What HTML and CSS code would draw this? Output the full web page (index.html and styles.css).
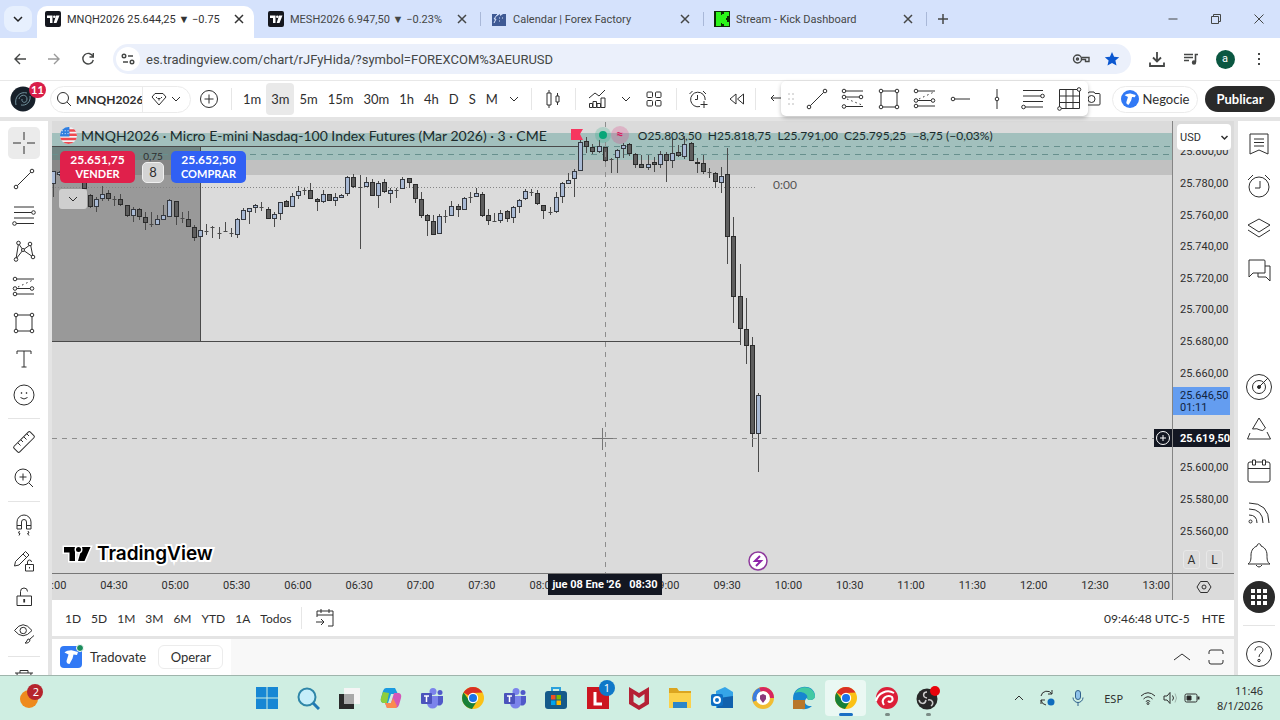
FILE: index.html
```html
<!DOCTYPE html>
<html lang="es">
<head>
  <meta charset="UTF-8">
  <meta name="viewport" content="width=device-width, initial-scale=1.0">
  <title>MNQH2026 25.644,25 ▼ −0.75%</title>
  <link rel="stylesheet" href="styles.css">
</head>
<body>
  <!-- icon set -->
  <svg class="sprite" aria-hidden="true">
    <symbol id="i-chev" viewBox="0 0 12 12"><path d="M2 4l4 4 4-4"/></symbol>
    <symbol id="i-close" viewBox="0 0 16 16"><path d="M4 4l8 8M12 4l-8 8"/></symbol>
    <symbol id="i-tv" viewBox="0 0 16 16"><rect width="16" height="16" rx="2" fill="#15171e" stroke="none"/><path d="M2 4.500h5.500V12H5V7H2zM11 4.500h3.500L11.500 12H8.700z" fill="#fff" stroke="none"/><circle cx="9.300" cy="5.800" r="1.300" fill="#fff" stroke="none"/></symbol>
    <symbol id="i-cross" viewBox="0 0 28 28"><path d="M14 3v8M14 17v8M3 14h8M17 14h8"/></symbol>
    <symbol id="i-line" viewBox="0 0 28 28"><circle cx="6" cy="22" r="1.800"/><circle cx="22" cy="6" r="1.800"/><path d="M7.300 20.700L20.700 7.300"/></symbol>
    <symbol id="i-fib" viewBox="0 0 28 28"><path d="M4 6h20M4 11.500h18M4 17h20M6 22.500h18"/><circle cx="23.500" cy="11.500" r="1.800" fill="#fff"/><circle cx="4.500" cy="22.500" r="1.800" fill="#fff"/></symbol>
    <symbol id="i-fib3" viewBox="0 0 28 28"><path d="M4 5.500h20M4 11h18M4 16.500h20M6 22h18"/><circle cx="23.500" cy="11" r="1.800" fill="#fff"/><circle cx="4.500" cy="22" r="1.800" fill="#fff"/></symbol>
    <symbol id="i-pattern" viewBox="0 0 28 28"><path d="M6 22L8.500 6.500 13 13 20.500 7.500 23 20 13 13z"/><g fill="#fff"><circle cx="6" cy="22.500" r="1.800"/><circle cx="8.500" cy="6" r="1.800"/><circle cx="20" cy="7" r="1.800"/><circle cx="23" cy="20" r="1.800"/><circle cx="13" cy="13" r="1.500"/></g></symbol>
    <symbol id="i-long" viewBox="0 0 28 28"><path d="M6 6h18M6 15.500h17M6 21h18"/><path d="M8 14l15-7" stroke-dasharray="1.500 3"/><g fill="#fff"><circle cx="5" cy="6" r="1.800"/><circle cx="5" cy="15.500" r="1.800"/><circle cx="5" cy="21" r="1.800"/><circle cx="22" cy="15.500" r="1.800"/></g></symbol>
    <symbol id="i-short" viewBox="0 0 28 28"><path d="M6 6h18M6 12h17M6 21.500h18"/><path d="M8 14l15 6" stroke-dasharray="1.500 3"/><g fill="#fff"><circle cx="5" cy="6" r="1.800"/><circle cx="5" cy="12" r="1.800"/><circle cx="5" cy="21.500" r="1.800"/><circle cx="22" cy="12" r="1.800"/></g></symbol>
    <symbol id="i-rect" viewBox="0 0 28 28"><path d="M6 6h16v16H6z"/><g fill="#fff"><circle cx="6" cy="6" r="1.800"/><circle cx="22" cy="6" r="1.800"/><circle cx="6" cy="22" r="1.800"/><circle cx="22" cy="22" r="1.800"/></g></symbol>
    <symbol id="i-text" viewBox="0 0 28 28"><path d="M7 9V6h14v3M14 6v16M11.500 22h5"/></symbol>
    <symbol id="i-smile" viewBox="0 0 28 28"><circle cx="14" cy="14" r="10"/><path d="M10.500 16.500q3.500 3 7 0"/><circle cx="11.500" cy="12" r=".5"/><circle cx="16.500" cy="12" r=".5"/></symbol>
    <symbol id="i-ruler" viewBox="0 0 28 28"><rect x="2.500" y="10" width="23" height="8" rx="1.500" transform="rotate(-45 14 14)"/><path d="M8 15l2.500 2.500M11 12l2 2M14 9l2.500 2.500M17 6l2 2"/></symbol>
    <symbol id="i-zoom" viewBox="0 0 28 28"><circle cx="13" cy="13" r="8"/><path d="M19 19l4 4M13 9.500v7M9.500 13h7"/></symbol>
    <symbol id="i-magnet" viewBox="0 0 28 28"><path d="M7 18v-7a7 7 0 0 1 14 0v7h-4.500v-7a2.500 2.500 0 0 0-5 0v7zM7 14.500h4.500M16.500 14.500H21M9.500 20l-1 2 1.500.5-1 2M18 20l1 2-1.500.5 1.500 2"/></symbol>
    <symbol id="i-penlock" viewBox="0 0 28 28"><path d="M4.500 19l1-4.500L15.500 4.500l3.500 3.500L9 18zM13 7l3.500 3.500M15.500 17.500h8V24h-8zM17.500 17.500V15a2 2 0 0 1 4 0M19.500 20v1.500"/></symbol>
    <symbol id="i-lock" viewBox="0 0 28 28"><path d="M7 13h14.500v9.500H7zM10.500 13V8.500a3.500 3.500 0 0 1 7 0"/><path d="M14.200 16v3.500" stroke-width="1.800"/></symbol>
    <symbol id="i-eye" viewBox="0 0 28 28"><path d="M4.500 11.500Q13 0 22 11.500 13 22 4.500 11.500zM15 24c3 .5 5-1 5-3.500l-2-.5c-1 1-1 3-3 4zM20 20l4-3.500"/><circle cx="13.200" cy="11.500" r="3.200"/></symbol>
    <symbol id="i-trash" viewBox="0 0 28 28"><path d="M5 7h18M10 7V4.500h8V7M7 7l1 16h12l1-16"/></symbol>
    <symbol id="i-vline" viewBox="0 0 28 28"><path d="M14 4v20"/><circle cx="14" cy="14" r="1.800" fill="#fff"/></symbol>
    <symbol id="i-hray" viewBox="0 0 28 28"><path d="M6 14h17"/><circle cx="6" cy="14" r="1.800" fill="#fff"/></symbol>
    <symbol id="i-gridbox" viewBox="0 0 28 28"><path d="M4.500 4.500h20v19h-20zM11 4.500v19M18 4.500v19M4.500 11h20M4.500 17.500h20"/><circle cx="24" cy="4.500" r="1.800" fill="#fff"/><circle cx="4.500" cy="23.500" r="1.800" fill="#fff"/></symbol>
    <symbol id="i-trad" viewBox="0 0 22 22"><path d="M4.500 6.500c2-1.500 5-2.500 8-2l5.500 1.500-1 3-3.500-.5-1 4L9.500 18c-2 0-3-1-3-3l2-6.500z" fill="#fff" stroke="none"/></symbol>
    <symbol id="i-chrome" viewBox="0 0 24 24"><circle cx="12" cy="12" r="11" fill="#fbc116" stroke="none"/><path d="M12 12L2.500 6.500A11 11 0 0 1 21.500 6.500L12 7z" fill="#d93025" stroke="none"/><path d="M2.500 6.500a11 11 0 0 0 8.500 16.400L16 15l-8-1z" fill="#188038" stroke="none"/><circle cx="12" cy="12" r="5.200" fill="#fff" stroke="none"/><circle cx="12" cy="12" r="4" fill="#1a73e8" stroke="none"/></symbol>
    <symbol id="i-teams" viewBox="0 0 24 24"><g stroke="none"><circle cx="13" cy="5.500" r="3.500" fill="#7b83eb"/><circle cx="20" cy="6.500" r="2.500" fill="#5059c9"/><path d="M16 10h7v6a4 4 0 0 1-6 3z" fill="#5059c9"/><path d="M7 10h11v7a5.500 5.500 0 0 1-11 0z" fill="#7b83eb"/><rect x="1" y="7" width="11" height="11" rx="1" fill="#4b53bc"/></g><path d="M4 10h5M6.500 10v6" stroke="#fff" stroke-width="1.500"/></symbol>
  </svg>

  <!-- browser tabs -->
  <header class="tabs">
    <button class="tab-search" aria-label="Buscar pestañas"><svg class="s12"><use href="#i-chev"/></svg></button>
    <div class="tab active"><svg class="s16"><use href="#i-tv"/></svg><span class="tab-title">MNQH2026 25.644,25 ▼ −0.75</span><button aria-label="Cerrar"><svg class="s16"><use href="#i-close"/></svg></button></div>
    <div class="tab line"><svg class="s16"><use href="#i-tv"/></svg><span class="tab-title">MESH2026 6.947,50 ▼ −0.23%</span><button aria-label="Cerrar"><svg class="s16"><use href="#i-close"/></svg></button></div>
    <div class="tab line"><svg class="s16" viewBox="0 0 16 16"><path d="M1 3h5v2l3-2v2l3-2h3v12H1z" fill="#3f5a94" stroke="none"/><path d="M3 12l2-4H3l3-4M8 7h1M11 7h1M8 10h1" stroke="#dbe5fb"/></svg><span class="tab-title">Calendar | Forex Factory</span><button aria-label="Cerrar"><svg class="s16"><use href="#i-close"/></svg></button></div>
    <div class="tab line"><svg class="s16" viewBox="0 0 16 16"><path d="M0 0h16v16H0z" fill="#0b2b05" stroke="none"/><path d="M2 1h5v3h1V3h2V1h5v4h-2v2h-1v2h1v2h2v4h-5v-2H8v-1H7v3H2z" fill="#2bf51a" stroke="none"/></svg><span class="tab-title">Stream - Kick Dashboard</span><button aria-label="Cerrar"><svg class="s16"><use href="#i-close"/></svg></button></div>
    <button class="new-tab" aria-label="Nueva pestaña"><svg class="s16" viewBox="0 0 16 16"><path d="M8 3v10M3 8h10"/></svg></button>
    <div class="window-buttons">
      <button aria-label="Minimizar"><svg class="s12" viewBox="0 0 12 12"><path d="M1.500 6h9"/></svg></button>
      <button aria-label="Restaurar"><svg class="s12" viewBox="0 0 12 12"><path d="M1.500 3.500h7v7h-7zM3.500 3.500v-2h7v7h-2"/></svg></button>
      <button aria-label="Cerrar ventana"><svg class="s12" viewBox="0 0 12 12"><path d="M1.500 1.500l9 9M10.500 1.500l-9 9"/></svg></button>
    </div>
  </header>

  <!-- address bar -->
  <div class="address">
    <button aria-label="Atrás"><svg class="s16" viewBox="0 0 16 16"><path d="M14 8H3M8 3L3 8l5 5"/></svg></button>
    <button class="dim" aria-label="Adelante"><svg class="s16" viewBox="0 0 16 16"><path d="M2 8h11M8 3l5 5-5 5"/></svg></button>
    <button aria-label="Recargar"><svg class="s16" viewBox="0 0 16 16"><path d="M13 5.500A5.300 5.300 0 1 0 13.300 9M13.300 2v4H9.500"/></svg></button>
    <div class="omnibox">
      <button class="site-info" aria-label="Información del sitio"><svg class="s16" viewBox="0 0 16 16"><circle cx="4" cy="5" r="1.800"/><path d="M8 5h5M3 11h5"/><circle cx="12" cy="11" r="1.800"/></svg></button>
      <input class="url" type="text" aria-label="Dirección" value="es.tradingview.com/chart/rJFyHida/?symbol=FOREXCOM%3AEURUSD">
      <svg class="s18" viewBox="0 0 18 18"><circle cx="5.500" cy="9" r="4"/><circle cx="5.500" cy="9" r="1"/><path d="M9.500 7.500h7.500v4h-3.500v-2h-4"/></svg>
      <svg class="s16 star" viewBox="0 0 16 16"><path d="M8 1l2.100 4.700 5.100.5-3.800 3.400 1.100 5L8 12l-4.500 2.600 1.100-5L.8 6.200l5.100-.5z"/></svg>
    </div>
    <button aria-label="Descargas"><svg class="s18" viewBox="0 0 18 18"><path d="M9 2v9M5 7.500L9 11.500l4-4M2 12.500V16h14v-3.500" stroke-width="1.800"/></svg></button>
    <button aria-label="Multimedia"><svg class="s18" viewBox="0 0 18 18"><path d="M2 4.500h9M2 7.500h9M2 10.500h5M13.500 12V4.500H16" stroke-width="1.600"/><circle cx="12" cy="12.500" r="1.500" fill="#454746"/></svg></button>
    <button aria-label="Perfil"><span class="avatar">a</span></button>
    <button aria-label="Menú"><svg class="s16" viewBox="0 0 16 16"><path d="M8 2v2M8 7v2M8 12v2" stroke-width="2"/></svg></button>
  </div>

  <!-- chart toolbar -->
  <nav class="toolbar">
    <button class="profile" aria-label="Perfil"><svg viewBox="0 0 26 26"><circle cx="13" cy="13" r="12.500" fill="#17202a" stroke="none"/><path d="M6 19C4 11 10 5 17 7M20 10c1 6-4 10-9 9M9 13c1-5 8-5 8 0s-6 4-5 0" stroke="#71909c"/></svg><b class="count">11</b></button>
    <div class="symbol-box">
      <button class="symbol"><svg class="s16" viewBox="0 0 16 16"><circle cx="7" cy="7" r="5.500"/><path d="M11 11l4 4"/></svg><b>MNQH2026</b></button>
      <button class="compare" aria-label="Datos"><svg class="s16" viewBox="0 0 16 16"><path d="M4 2.500h8l3 3.500-7 8-7-8zM5.500 6v1M10.500 6v1M8 8v1.500M6.500 7.500h3"/></svg><svg class="s12"><use href="#i-chev"/></svg></button>
    </div>
    <button class="add" aria-label="Comparar"><svg class="s20" viewBox="0 0 20 20"><circle cx="10" cy="10" r="8.500"/><path d="M10 5.500v9M5.500 10h9"/></svg></button>
    <i class="vsep"></i>
    <div class="intervals">
      <button>1m</button><button class="on">3m</button><button>5m</button><button>15m</button><button>30m</button><button>1h</button><button>4h</button><button>D</button><button>S</button><button>M</button><button aria-label="Más intervalos"><svg class="s12"><use href="#i-chev"/></svg></button>
    </div>
    <i class="vsep"></i>
    <button class="tool" aria-label="Velas"><svg class="s20" viewBox="0 0 20 20"><path d="M4 4h4v12H4zM6 1v3M6 16v3M13 7h3v6h-3zM14.500 4v3M14.500 13v3"/></svg></button>
    <i class="vsep"></i>
    <button class="tool" aria-label="Indicadores"><svg class="s20" viewBox="0 0 20 20"><path d="M2 9l6-5 4 3 6-6M2.500 18.500v-4h3v4zM6 18.500v-6h3.500v6zM10 18.500v-4h3.500v4zM14 18.500V9h4v9.500z"/></svg></button>
    <button class="tool slim" aria-label="Favoritos"><svg class="s12"><use href="#i-chev"/></svg></button>
    <button class="tool" aria-label="Diseño"><svg class="s20" viewBox="0 0 20 20"><rect x="3" y="3" width="5.500" height="5.500" rx="1"/><rect x="11.500" y="3" width="5.500" height="5.500" rx="1"/><rect x="3" y="11.500" width="5.500" height="5.500" rx="1"/><rect x="11.500" y="11.500" width="5.500" height="5.500" rx="1"/></svg></button>
    <i class="vsep"></i>
    <button class="tool" aria-label="Alerta"><svg class="s20" viewBox="0 0 20 20"><path d="M12 17.500A7.300 7.300 0 1 1 17.200 11M9.500 6v4.500H7M1.500 5l3-3M15 2l3 3M12.500 15.500h7M16 12v7"/></svg></button>
    <button class="tool near" aria-label="Reproducir"><svg class="s20" viewBox="0 0 20 20"><path d="M9 5v10l-6-5zM16.500 5v10l-6-5z"/></svg></button>
    <i class="vsep"></i>
    <button class="tool" aria-label="Deshacer"><svg class="s20" viewBox="0 0 20 20"><path d="M16 9H4M7 6L4 9l3 3"/></svg></button>
    <button class="camera" aria-label="Instantánea"><svg class="s20" viewBox="0 0 20 20"><path d="M2 4.500h4l1-1.500h5l1 1.500h4q1 0 1 1V15q0 1-1 1H2z"/><circle cx="9.500" cy="10" r="3.500"/></svg></button>
    <button class="trade"><svg class="s18 tround" viewBox="0 0 22 22"><use href="#i-trad"/></svg>Negocie</button>
    <button class="publish">Publicar</button>
    <div class="floating">
      <svg class="grip" viewBox="0 0 8 14"><path d="M1 2h2M5 2h2M1 7h2M5 7h2M1 12h2M5 12h2"/></svg>
      <button aria-label="Línea"><svg class="s28"><use href="#i-line"/></svg></button>
      <button aria-label="Posición corta"><svg class="s28"><use href="#i-short"/></svg></button>
      <button aria-label="Rectángulo"><svg class="s28"><use href="#i-rect"/></svg></button>
      <button aria-label="Posición larga"><svg class="s28"><use href="#i-long"/></svg></button>
      <button aria-label="Rayo horizontal"><svg class="s28"><use href="#i-hray"/></svg></button>
      <button aria-label="Línea vertical"><svg class="s28"><use href="#i-vline"/></svg></button>
      <button aria-label="Fibonacci"><svg class="s28"><use href="#i-fib3"/></svg></button>
      <button aria-label="Gann"><svg class="s28"><use href="#i-gridbox"/></svg></button>
    </div>
  </nav>

  <div class="workspace">
    <!-- drawing tools -->
    <aside class="tools">
      <button class="on" aria-label="Cruz"><svg class="s28"><use href="#i-cross"/></svg></button>
      <button aria-label="Línea de tendencia"><svg class="s28"><use href="#i-line"/></svg></button>
      <button aria-label="Retroceso"><svg class="s28"><use href="#i-fib"/></svg></button>
      <button aria-label="Patrones"><svg class="s28"><use href="#i-pattern"/></svg></button>
      <button aria-label="Predicción"><svg class="s28"><use href="#i-long"/></svg></button>
      <button aria-label="Formas"><svg class="s28"><use href="#i-rect"/></svg></button>
      <button aria-label="Texto"><svg class="s28"><use href="#i-text"/></svg></button>
      <button aria-label="Iconos"><svg class="s28"><use href="#i-smile"/></svg></button>
      <hr>
      <button aria-label="Medir"><svg class="s28"><use href="#i-ruler"/></svg></button>
      <button aria-label="Ampliar"><svg class="s28"><use href="#i-zoom"/></svg></button>
      <hr>
      <button aria-label="Imán"><svg class="s28"><use href="#i-magnet"/></svg></button>
      <button aria-label="Modo dibujo"><svg class="s28"><use href="#i-penlock"/></svg></button>
      <button aria-label="Bloquear"><svg class="s28"><use href="#i-lock"/></svg></button>
      <button aria-label="Ocultar"><svg class="s28"><use href="#i-eye"/></svg></button>
      <hr>
      <button aria-label="Eliminar"><svg class="s28"><use href="#i-trash"/></svg></button>
    </aside>

    <main class="center">
      <section class="chart">
        <div class="pane">
          <svg class="plot" id="plot" width="1120" height="451">
            <g stroke="none">
              <rect x="0" y="11" width="1120" height="27" fill="#a2c0bd"/>
              <rect x="0" y="38" width="1120" height="15" fill="#c1c1c1"/>
              <rect x="0" y="24" width="148" height="196" fill="#000" fill-opacity=".3"/>
            </g>
            <g class="drawn">
              <path d="M0 24.500h529M0 219.500h689M148.500 24v196"/>
              <path d="M0 32.500h1120M529 24.500h591" stroke="#67908d" stroke-dasharray="6 5"/>
              <path d="M0 65.500h705" stroke="#858585" stroke-dasharray="1 2"/>
            </g>
            <g id="candles"></g>
            <path d="M553.500 0v451M0 316.500h1120" stroke="#8d8d8d" stroke-dasharray="5 5"/>
            <path d="M550.500 306v22M540 316.500h21" stroke="#777"/>
            <circle cx="706" cy="439" r="9" fill="#fff" stroke="#8e3a9d" stroke-width="1.500"/>
            <path d="M708 434l-5 5h6l-5 5" stroke="#8e24aa" stroke-width="2"/>
          </svg>
          <div class="legend">
            <svg class="flag" viewBox="0 0 18 18"><clipPath id="round"><circle cx="9" cy="9" r="9"/></clipPath><g clip-path="url(#round)" stroke="none"><path d="M0 0h18v18H0z" fill="#f2f4f7"/><path d="M9 2.500h9v2.500H9zM9 7h9v2.500H9zM0 11.500h18V14H0zM0 16h18v2H0z" fill="#ee4a50"/><path d="M0 0h10v10H0z" fill="#2f7fe0"/></g><path d="M2 4h7M2 7h7" stroke="#fff" stroke-dasharray="1 2"/></svg>
            <span class="title">MNQH2026 · Micro E-mini Nasdaq-100 Index Futures (Mar 2026) · 3 · CME</span>
            <svg class="redflag" viewBox="0 0 12 12"><path d="M0 0h12L9 5l3 6H0z"/></svg>
            <i class="dot"></i>
            <i class="approx">≈</i>
            <span class="ohlc">O25.803,50 &nbsp;H25.818,75 &nbsp;L25.791,00 &nbsp;C25.795,25 &nbsp;−8,75 (−0,03%)</span>
          </div>
          <div class="orders">
            <button class="sell"><b>25.651,75</b><span>VENDER</span></button>
            <div class="spread"><span>0,75</span><b>8</b></div>
            <button class="buy"><b>25.652,50</b><span>COMPRAR</span></button>
          </div>
          <button class="collapse" aria-label="Contraer"><svg class="s12"><use href="#i-chev"/></svg></button>
          <span class="countdown">0:00</span>
          <div class="brand"><svg viewBox="0 0 28 16"><path d="M1 1h11v14H6.500V6.500H1zM19 1h8.500l-6 14H15z"/><circle cx="15.500" cy="3.500" r="2.500"/></svg><span>TradingView</span></div>
          <button class="plus-tag" aria-label="Añadir orden"><svg class="s16" viewBox="0 0 16 16"><circle cx="8" cy="8" r="6.500"/><path d="M8 5v6M5 8h6"/></svg></button>
        </div>
        <div class="prices">
          <span>25.800,00</span><span>25.780,00</span><span>25.760,00</span><span>25.740,00</span><span>25.720,00</span><span>25.700,00</span><span>25.680,00</span><span>25.660,00</span><span></span><span></span><span>25.600,00</span><span>25.580,00</span><span>25.560,00</span>
          <div class="currency"><select aria-label="Moneda"><option>USD</option></select><svg class="s12"><use href="#i-chev"/></svg></div>
          <div class="last">25.646,50<br>01:11</div>
          <div class="cursor-price">25.619,50</div>
          <div class="scale"><button>A</button><button>L</button></div>
        </div>
        <div class="times">
          <div class="ticks"><span>04:00</span><span>04:30</span><span>05:00</span><span>05:30</span><span>06:00</span><span>06:30</span><span>07:00</span><span>07:30</span><span>08:00</span><span></span><span>09:00</span><span>09:30</span><span>10:00</span><span>10:30</span><span>11:00</span><span>11:30</span><span>12:00</span><span>12:30</span><span>13:00</span></div>
          <div class="cursor-time">jue 08 Ene '26 &nbsp; 08:30</div>
        </div>
        <button class="settings" aria-label="Ajustes"><svg class="s16" viewBox="0 0 16 16"><path d="M4.500 2.500h7L15 8l-3.500 5.500h-7L1 8z"/><circle cx="8" cy="8" r="2"/></svg></button>
      </section>

      <section class="ranges">
        <button>1D</button><button>5D</button><button>1M</button><button>3M</button><button>6M</button><button>YTD</button><button>1A</button><button>Todos</button>
        <i class="vsep"></i>
        <button aria-label="Ir a"><svg class="s20" viewBox="0 0 20 20"><path d="M2 9V3h16v15h-5M2 7h16M6 1v4M14 1v4M1 14h8M6 11l3 3-3 3"/></svg></button>
        <div class="session"><button>09:46:48 UTC-5</button><button>HTE</button></div>
      </section>

      <section class="broker">
        <div class="broker-tab"><span class="logo"><svg viewBox="0 0 22 22"><use href="#i-trad"/></svg></span><span>Tradovate</span><button>Operar</button></div>
        <button class="expand" aria-label="Abrir panel"><svg class="s20" viewBox="0 0 20 20"><path d="M2 13l8-6 8 6"/></svg></button>
        <button aria-label="Maximizar"><svg class="s20" viewBox="0 0 20 20"><path d="M3 7V5q0-2 2-2h10q2 0 2 2v2M3 13v2q0 2 2 2h10q2 0 2-2v-2"/></svg></button>
      </section>
    </main>

    <!-- right widgets -->
    <aside class="widgets">
      <button aria-label="Lista"><svg class="s28" viewBox="0 0 28 28"><path d="M5 4h18v20l-9-4-9 4zM9 9h10M9 12.500h10M9 16h10"/></svg></button>
      <button aria-label="Alertas"><svg class="s28" viewBox="0 0 28 28"><circle cx="14" cy="15" r="10"/><path d="M15 9v7h-5M3 8l5-5M20 3l5 5"/></svg></button>
      <button aria-label="Objetos"><svg class="s28" viewBox="0 0 28 28"><path d="M14 5l11 6-11 7-11-7zM3 16l11 7 11-7"/></svg></button>
      <button aria-label="Chats"><svg class="s28" viewBox="0 0 28 28"><path d="M4 4h15q1 0 1 1v12H8l-4 4zM20 10h5v15l-4-4h-8v-4"/></svg></button>
      <button class="bottom" aria-label="Screener"><svg class="s28" viewBox="0 0 28 28"><circle cx="14" cy="14" r="12.500"/><circle cx="14" cy="14" r="6.500"/><circle cx="14" cy="14" r="1.500" fill="#222"/><path d="M14 14l9-9"/></svg></button>
      <button aria-label="Pine"><svg class="s28" viewBox="0 0 28 28"><path d="M7.500 14L14 3l6.500 10q-3 4-5.500 2t-7.500-1zM5 18l-2.500 6h23L22 17"/></svg></button>
      <button aria-label="Calendario"><svg class="s28" viewBox="0 0 28 28"><rect x="3" y="5" width="22" height="20" rx="2"/><path d="M3 11.500h22M7.500 3h3v5h-3zM17.500 3h3v5h-3z" fill="#fff"/></svg></button>
      <button aria-label="Noticias"><svg class="s28" viewBox="0 0 28 28"><circle cx="5.500" cy="22.500" r="1.500"/><path d="M4 16q8 0 8 8M4 10q14 0 14 14M4 4q20 0 20 20"/></svg></button>
      <button aria-label="Notificaciones"><svg class="s28" viewBox="0 0 28 28"><path d="M3 23c3-2 3-5 3-9 0-5 3-8 6-9 0-3 4-3 4 0 3 1 6 4 6 9 0 4 0 7 3 9zM11 24q3 4 6 0"/></svg></button>
      <button aria-label="Productos"><svg class="s32" viewBox="0 0 32 32"><circle cx="16" cy="16" r="16" fill="#2a2a2a" stroke="none"/><path d="M8 10h16M8 16h16M8 22h16" stroke="#fff" stroke-width="4" stroke-dasharray="4 2"/></svg></button>
      <hr>
      <button aria-label="Ayuda"><svg class="s28" viewBox="0 0 28 28"><circle cx="14" cy="14" r="12.500"/><path d="M10 10.500c0-5 8-5 8-.5 0 3-4 3-4 7"/><circle cx="14" cy="20.500" r="1.200"/></svg></button>
    </aside>
  </div>

  <!-- windows taskbar -->
  <footer class="taskbar">
    <div class="weather"><svg viewBox="0 0 28 28"><ellipse cx="13" cy="15" rx="9" ry="9" fill="#ee8a1d" stroke="none"/><circle cx="19" cy="8" r="8" fill="#b5242d" stroke="none"/></svg><b class="badge">2</b></div>
    <div class="apps">
      <button aria-label="Inicio"><svg viewBox="0 0 24 24"><path d="M1 1h10.500v10.500H1zM12.500 1H23v10.500H12.500zM1 12.500h10.500V23H1zM12.500 12.500H23V23H12.500z" fill="#1787d4" stroke="none"/></svg></button>
      <button aria-label="Buscar"><svg viewBox="0 0 24 24"><circle cx="11" cy="11" r="8.500" fill="#c6eefa" stroke="#2f86a8" stroke-width="2"/><path d="M17 17l6 6" stroke="#1f78b5" stroke-width="3"/></svg></button>
      <button aria-label="Vista de tareas"><svg viewBox="0 0 24 24"><path d="M7 2h16v16H7z" fill="#f5f5f5" stroke="none"/><path d="M2 8h15v15H2z" fill="#2a2a2a" stroke="none"/><path d="M7 8h10v10H7z" fill="#a9a9a9" stroke="none"/></svg></button>
      <button aria-label="Copilot"><svg viewBox="0 0 24 24"><g stroke="none"><path d="M7 2h9l3 6h-7l-3 9H4q-3-1-2-5l2-7q1-3 3-3z" fill="#1a9be0"/><path d="M2 12l2-6 6 1-2 10H4q-3-1-2-5z" fill="#8fce3b"/><path d="M17 22H8l-2-5h6l3-10h5q3 1 2 5l-2 7q-1 3-3 3z" fill="#d357b8"/><path d="M8 22l-2-5h6l2-5 4 8-1 2z" fill="#fb8a50"/></g></svg></button>
      <button aria-label="Teams"><svg><use href="#i-teams"/></svg></button>
      <button aria-label="Chrome"><svg><use href="#i-chrome"/></svg></button>
      <button aria-label="Teams personal"><svg><use href="#i-teams"/></svg></button>
      <button aria-label="Store"><svg viewBox="0 0 24 24"><path d="M8 6V2h8v4" stroke="#2aa0dc" stroke-width="2"/><rect x="1" y="5" width="22" height="18" rx="3" fill="#155a8a" stroke="none"/><path d="M7 9h4.500v4.500H7z" fill="#f25022" stroke="none"/><path d="M12.500 9H17v4.500h-4.500z" fill="#7fba00" stroke="none"/><path d="M7 14.500h4.500V19H7z" fill="#00a4ef" stroke="none"/><path d="M12.500 14.500H17V19h-4.500z" fill="#ffb900" stroke="none"/></svg></button>
      <button aria-label="L"><svg viewBox="0 0 24 24"><path d="M1 1h22v22H1z" fill="#cc1620" stroke="none"/><path d="M9 6v12h7" stroke="#fff" stroke-width="3"/></svg><b class="badge blue">1</b></button>
      <button aria-label="McAfee"><svg viewBox="0 0 24 24"><path d="M2 1l10 6 10-6v17l-10 6-10-6zM6.500 8v8l5.500 3.500 5.500-3.500V8L12 12z" fill="#b52135" fill-rule="evenodd" stroke="none"/></svg></button>
      <button aria-label="Explorador"><svg viewBox="0 0 24 24"><path d="M1 2h8l2 3h12v17H1z" fill="#dba520" stroke="none"/><path d="M1 7h22v15H1z" fill="#fbd14b" stroke="none"/><path d="M5 16h14v6H5z" fill="#2d85c9" stroke="none"/></svg></button>
      <button aria-label="Outlook"><svg viewBox="0 0 24 24"><path d="M6 5l9-4 8 5v16H6z" fill="#35a5e8" stroke="none"/><path d="M9 12l14-2v12H7z" fill="#1161ad" stroke="none"/><rect x="1" y="8" width="12" height="12" rx="2" fill="#0d6fc4" stroke="none"/><circle cx="7" cy="14" r="3" stroke="#fff" stroke-width="2"/></svg></button>
      <button aria-label="Navegador seguro"><svg viewBox="0 0 24 24"><circle cx="12" cy="12" r="9" fill="#fff" stroke="#f1bd32" stroke-width="4"/><path d="M4 15A9 9 0 0 1 9 3.500" stroke="#3b7de0" stroke-width="4"/><path d="M9 3.500A9 9 0 0 1 21 12" stroke="#d72560" stroke-width="4"/><path d="M12 8l3 1.500v3.500l-3 4-3-4V9.500z" fill="#8b3a7b" stroke="none"/></svg></button>
      <button aria-label="Edge"><svg viewBox="0 0 24 24"><path d="M1 12C2-3 23-2 23 10c0 5-8 5-8 2-4 3-2 9 5 8-8 7-19 2-19-8z" fill="#1687cf" stroke="none"/><path d="M3 7C8-2 22 0 23 10c0 5-8 5-8 2C17 8 9 4 3 7z" fill="#43c9a3" stroke="none"/><path d="M1 14h12v9H1z" fill="#b8772a" stroke="none"/></svg></button>
      <button class="current" aria-label="Chrome activo"><svg><use href="#i-chrome"/></svg></button>
      <button class="open" aria-label="Camtasia"><svg viewBox="0 0 24 24"><circle cx="12" cy="12" r="11" fill="#dc1f38" stroke="none"/><path d="M1 15C3 7 12 3 19 7" stroke="#fff" stroke-width="2"/><path d="M9 19c-4-6 3-11 8-8 2 4-2 6-4 4" stroke="#fff" stroke-width="2"/></svg></button>
      <button class="open" aria-label="OBS"><svg viewBox="0 0 24 24"><circle cx="11" cy="13" r="10.500" fill="#272727" stroke="none"/><path d="M11 12C6 11 7 6 11 6M12 14c5-1 6 4 3 6M10 14c-1 5-6 4-7 0" stroke="#ccc" stroke-width="1.500"/><circle cx="19" cy="5" r="5" fill="#e8040b" stroke="none"/></svg></button>
    </div>
    <div class="tray">
      <svg class="s12 up" viewBox="0 0 12 12"><path d="M2 8l4-4 4 4"/></svg>
      <svg class="s18" viewBox="0 0 18 18"><path d="M3 7a6 6 0 0 1 11-2M14 1v4h-4M3 11a6 6 0 0 0 5 5M3 15v-4h4"/><circle cx="13" cy="13" r="3.500" fill="#0f6cbd" stroke="none"/></svg>
      <svg class="s18" viewBox="0 0 18 18"><rect x="6.500" y="1.500" width="5" height="9" rx="2.500" fill="#8fc2ea" stroke="#31618c"/><path d="M4 8.500a5 5 0 0 0 10 0M9 13.500V17" stroke="#31618c"/></svg>
      <span class="lang">ESP</span>
      <div class="status">
        <svg class="s16" viewBox="0 0 16 16"><path d="M1 6q7-6.500 14 0M3.500 9q4.500-4.500 9 0M5.800 11.500q2.200-2 4.400 0"/><circle cx="8" cy="13.500" r="1"/></svg>
        <svg class="s16" viewBox="0 0 16 16"><path d="M2 6h3l3-3.500v11L5 10H2zM10.500 5.500q2 2.500 0 5"/><path d="M13 3.500q3 4.500 0 9" stroke="#9fb5ac"/></svg>
        <svg class="s16" viewBox="0 0 16 16"><rect x="1" y="4" width="12" height="8" rx="1.500"/><path d="M3 6h4v4H3z" fill="#222"/><path d="M14.500 6.500v3" stroke-width="2"/></svg>
      </div>
      <div class="date">11:46<br>8/1/2026</div>
    </div>
  </footer>

  <script src="script.js"></script>
</body>
</html>
```
FILE: styles.css
```css
* {
  box-sizing: border-box;
  margin: 0;
  padding: 0;
}
body {
  display: flex;
  flex-direction: column;
  height: 100vh;
  overflow: hidden;
  font-family: Lato, "Liberation Sans", sans-serif;
  font-size: 13px;
  color: #2e2e2e;
  background: #fff;
}
button,
input,
select {
  font: inherit;
  color: inherit;
  border: 0;
  background: none;
}
button {
  display: flex;
  align-items: center;
  justify-content: center;
  white-space: nowrap;
}
svg {
  display: block;
  flex: none;
  fill: none;
  stroke: currentColor;
}
i {
  font-style: normal;
}
hr {
  border: 0;
  border-top: 1px solid #e4e4e4;
}
.sprite {
  position: absolute;
  width: 0;
  height: 0;
}
.s12 { width: 12px; height: 12px; }
.s16 { width: 16px; height: 16px; }
.s18 { width: 18px; height: 18px; }
.s20 { width: 20px; height: 20px; }
.s28 { width: 28px; height: 28px; }
.s32 { width: 32px; height: 32px; }

/* browser chrome */
.tabs,
.address {
  font-family: Roboto, "Open Sans", sans-serif;
  color: #454746;
}
.tabs {
  display: flex;
  align-items: center;
  height: 38px;
  padding-left: 4px;
  background: #d5e2fc;
  font-size: 11px;
}
.tab-search {
  width: 28px;
  height: 26px;
  margin-right: 5px;
  border-radius: 9px;
  background: #e7f0fe;
  color: #222;
}
.tab-search svg,
.tab button svg,
.new-tab svg {
  stroke-width: 1.5;
}
.tab {
  position: relative;
  display: flex;
  align-items: center;
  flex: 0 1 223px;
  min-width: 0;
  height: 32px;
  margin-top: 6px;
  padding: 0 13px 6px 8px;
  gap: 6px;
}
.tab.active {
  flex-basis: 217px;
  margin-right: 6px;
  padding-right: 7px;
  border-radius: 10px 10px 0 0;
  background: #fff;
  color: #333;
}
.tab.line::after {
  content: "";
  position: absolute;
  right: 2px;
  top: 6px;
  width: 1px;
  height: 14px;
  background: #a9b8d8;
}
.tab-title {
  flex: 1;
  overflow: hidden;
  white-space: nowrap;
}
.new-tab {
  width: 28px;
}
.window-buttons {
  display: flex;
  margin-left: auto;
}
.window-buttons button {
  width: 43px;
  height: 32px;
}
.address {
  display: flex;
  align-items: center;
  height: 42px;
  padding: 0 4px 0 3px;
}
.address > button {
  width: 34px;
  height: 34px;
}
.address svg {
  stroke-width: 1.4;
}
.address .dim {
  color: #9a9a9a;
}
.omnibox {
  display: flex;
  align-items: center;
  flex: 1;
  height: 30px;
  margin: 0 9px 0 8px;
  padding: 0 11px 0 3px;
  gap: 14px;
  border-radius: 15px;
  background: #ebf0fb;
}
.site-info {
  width: 24px;
  height: 24px;
  border-radius: 50%;
  background: #fff;
}
.url {
  flex: 1;
  margin-left: -8px;
  font-size: 13px;
}
.star {
  fill: #0b57d0;
  stroke: none;
}
.avatar {
  width: 19px;
  height: 19px;
  border-radius: 50%;
  background: #0b5741;
  color: #fff;
  font-size: 11px;
  line-height: 18px;
}

/* chart toolbar */
.toolbar {
  position: relative;
  display: flex;
  align-items: center;
  height: 37px;
  padding: 0 5px 0 10px;
  border-top: 1px solid #e8e8e8;
}
.vsep {
  width: 1px;
  height: 22px;
  background: #e6e6e6;
}
.profile {
  position: relative;
  width: 36px;
  justify-content: flex-start;
}
.profile svg {
  width: 26px;
  height: 26px;
}
.count {
  position: absolute;
  left: 19px;
  top: -4px;
  width: 17px;
  height: 16px;
  border-radius: 8px;
  background: #d91e49;
  color: #fff;
  font-size: 11px;
  line-height: 16px;
}
.symbol-box {
  display: flex;
  width: 141px;
  height: 27px;
  margin-left: 4px;
  padding-left: 5px;
  border: 1px solid #ebebeb;
  border-radius: 14px;
}
.symbol {
  width: 87px;
  gap: 4px;
  justify-content: flex-start;
  overflow: hidden;
  border-right: 1px solid #ebebeb;
  font-size: 12px;
}
.compare {
  flex: 1;
  gap: 3px;
}
.add {
  width: 36px;
  margin-right: 4px;
}
.intervals {
  display: flex;
  padding: 0 6px;
}
.intervals button {
  height: 32px;
  padding: 0 5px;
  border-radius: 4px;
}
.intervals .on {
  background: #e9e9e9;
}
.tool {
  width: 43px;
}
.tool.slim {
  width: 14px;
}
.tool.near {
  width: 35px;
}
.camera {
  margin-left: auto;
  margin-right: 10px;
}
.trade {
  width: 86px;
  height: 27px;
  gap: 4px;
  margin-right: 7px;
  border: 1px solid #ebebeb;
  border-radius: 14px;
}
.tround {
  border-radius: 50%;
  background: #3179f5;
}
.publish {
  width: 70px;
  height: 26px;
  border-radius: 13px;
  background: #2a2a2a;
  color: #fff;
  font-weight: 700;
}
.floating {
  position: absolute;
  right: 192px;
  top: 0;
  display: flex;
  align-items: center;
  height: 35px;
  padding: 0 1px 0 6px;
  border-radius: 5px;
  background: #fff;
  box-shadow: 0 2px 4px rgba(0, 0, 0, 0.25);
}
.floating button {
  width: 36px;
}
.grip {
  width: 8px;
  height: 14px;
  margin-right: 4px;
  color: #bbb;
}

/* workspace */
.workspace {
  display: flex;
  flex: 1;
  min-height: 0;
  gap: 4px;
  padding-top: 4px;
  background: #e4e4e4;
}
.tools,
.widgets {
  display: flex;
  flex-direction: column;
  align-items: center;
  overflow: hidden;
  background: #fff;
}
.tools {
  width: 48px;
  padding-top: 4px;
}
.tools button {
  flex: none;
  width: 32px;
  height: 32px;
  margin: 2px 0;
  border-radius: 5px;
}
.tools .on {
  background: #ebebeb;
}
.tools hr {
  width: 32px;
  margin: 5px 0;
}
.widgets {
  width: 42px;
  padding-top: 2px;
}
.widgets button {
  flex: none;
  width: 42px;
  height: 42px;
}
.widgets .bottom {
  margin-top: auto;
}
.widgets hr {
  width: 32px;
  margin: 7px 0;
}
.center {
  display: flex;
  flex-direction: column;
  flex: 1;
  min-width: 0;
}

/* chart */
.chart {
  display: grid;
  flex: 1;
  grid-template-columns: 1fr 62px;
  grid-template-rows: 1fr 27px;
  min-height: 0;
  background: #dbdbdb;
}
.pane {
  position: relative;
  overflow: hidden;
}
.plot {
  position: absolute;
  left: 0;
  top: 1px;
}
.drawn {
  stroke: #4a4a4a;
}
.up-bar {
  fill: #a9bad5;
  stroke: #34383f;
}
.down-bar {
  fill: #5e5e5e;
  stroke: #2b2b2b;
}
.wick {
  stroke: #4b4b4b;
}
.legend {
  position: relative;
  display: flex;
  align-items: center;
  height: 20px;
  margin-top: 4px;
  padding-left: 8px;
  color: #1c2b2b;
}
.flag {
  width: 17px;
  height: 17px;
  margin-right: 4px;
}
.title {
  margin-right: 24px;
  font-size: 14px;
  white-space: nowrap;
}
.redflag {
  width: 12px;
  height: 12px;
  fill: #f7365f;
  stroke: none;
}
.dot {
  width: 8px;
  height: 8px;
  margin: 0 4px 0 16px;
  border-radius: 50%;
  background: #08a678;
  box-shadow: 0 0 0 4px rgba(8, 166, 120, 0.2);
}
.approx {
  width: 18px;
  height: 18px;
  margin-right: 9px;
  border-radius: 50%;
  background: rgba(225, 60, 130, 0.25);
  color: #d81b60;
  font-weight: 700;
  line-height: 17px;
  text-align: center;
}
.ohlc {
  font-size: 12px;
  white-space: nowrap;
}
.orders {
  position: relative;
  display: flex;
  margin-top: 6px;
  padding-left: 8px;
}
.sell,
.buy {
  flex-direction: column;
  width: 75px;
  height: 32px;
  border-radius: 5px;
  color: #fff;
  font-size: 11px;
  line-height: 14px;
}
.sell b,
.buy b {
  font-size: 12px;
}
.sell span,
.buy span {
  font-weight: 700;
}
.sell { background: #e0204b; }
.buy { background: #3060f4; }
.spread {
  width: 36px;
  font-size: 10px;
  line-height: 10px;
  text-align: center;
}
.spread span {
  display: block;
}
.spread b {
  display: block;
  width: 22px;
  height: 21px;
  margin: 1px auto 0;
  border: 1px solid #f0f0f0;
  border-radius: 5px;
  background: #d4d4d4;
  font-size: 13px;
  font-weight: 400;
  line-height: 19px;
}
.collapse {
  position: relative;
  width: 28px;
  height: 20px;
  margin: 6px 0 0 7px;
  border-radius: 3px;
  background: #cfcfcf;
}
.countdown {
  position: absolute;
  left: 721px;
  top: 56px;
  color: #555;
  font-size: 12px;
}
.brand {
  position: absolute;
  left: 11px;
  bottom: 7px;
  display: flex;
  align-items: center;
  gap: 6px;
  font-family: Inter, sans-serif;
  font-size: 19px;
  font-weight: 600;
  line-height: 24px;
}
.brand span {
  -webkit-text-stroke: 4px #fff;
  paint-order: stroke fill;
  color: #000;
}
.brand svg {
  width: 28px;
  height: 16px;
  overflow: visible;
  fill: #000;
  stroke: #fff;
  stroke-width: 3;
  paint-order: stroke;
}
.plus-tag {
  position: absolute;
  right: 0;
  top: 308px;
  width: 18px;
  height: 18px;
  background: #131722;
  color: #fff;
}
.prices {
  position: relative;
  display: flex;
  flex-direction: column;
  padding: 15px 0 26px;
  border-left: 1px solid #858585;
  font-family: Roboto, sans-serif;
  font-size: 11px;
}
.prices > span {
  display: flex;
  align-items: center;
  flex: 1;
  padding-left: 7px;
}
.currency {
  position: absolute;
  left: 4px;
  top: 3px;
  display: flex;
  align-items: center;
  width: 54px;
  height: 26px;
  border-radius: 4px;
  background: #fff;
}
.currency select {
  width: 100%;
  height: 100%;
  padding-left: 3px;
  appearance: none;
}
.currency svg {
  position: absolute;
  right: 2px;
  width: 9px;
  height: 9px;
  stroke-width: 2;
}
.last,
.cursor-price {
  position: absolute;
  left: 0;
  right: 4px;
  padding-left: 7px;
}
.last {
  top: 266px;
  height: 28px;
  padding-top: 3px;
  background: #649df0;
  color: #10233f;
  line-height: 12px;
}
.cursor-price {
  top: 308px;
  height: 18px;
  background: #131722;
  color: #fff;
  font-weight: 700;
  line-height: 19px;
}
.scale {
  position: absolute;
  left: 10px;
  bottom: 4px;
  display: flex;
  gap: 6px;
}
.scale button {
  width: 17px;
  height: 19px;
  border: 1px solid #e8e8e8;
  border-radius: 3px;
  font-size: 12px;
}
.times {
  position: relative;
  overflow: hidden;
  border-top: 1px solid #777;
  font-family: Roboto, sans-serif;
  font-size: 11px;
  text-align: center;
}
.ticks {
  display: flex;
  margin: 0 -15px 0 -30px;
  line-height: 23px;
}
.ticks span {
  flex: 1;
}
.cursor-time {
  position: absolute;
  left: 496px;
  top: 0;
  width: 114px;
  height: 21px;
  background: #131722;
  color: #fff;
  font-weight: 700;
  line-height: 22px;
}
.settings {
  border-top: 1px solid #777;
  border-left: 1px solid #858585;
}

/* below the chart */
.ranges {
  display: flex;
  align-items: center;
  height: 36px;
  padding: 0 4px 0 8px;
  background: #fff;
  font-size: 12px;
}
.ranges button {
  padding: 0 5px;
}
.ranges .vsep {
  margin: 0 8px 0 5px;
}
.session {
  display: flex;
  gap: 2px;
  margin-left: auto;
}
.broker {
  display: flex;
  align-items: center;
  height: 36px;
  margin-top: 3px;
  padding-right: 8px;
  background: #f8f8f8;
}
.broker-tab {
  display: flex;
  align-items: center;
  align-self: stretch;
  gap: 8px;
  margin-right: auto;
  padding: 0 8px;
  background: #fff;
}
.broker-tab button {
  width: 65px;
  height: 24px;
  margin-left: 4px;
  border: 1px solid #ececec;
  border-radius: 6px;
}
.logo {
  position: relative;
  width: 22px;
  height: 22px;
  border-radius: 4px;
  background: #3179f5;
}
.logo::after {
  content: "";
  position: absolute;
  right: -2px;
  top: -2px;
  width: 6px;
  height: 6px;
  border: 1px solid #fff;
  border-radius: 50%;
  background: #1b8c5c;
}
.expand {
  margin-right: 14px;
}

/* taskbar */
.taskbar {
  display: flex;
  align-items: center;
  height: 45px;
  border-top: 1px solid #9fb5ac;
  background: #cfeee2;
  font-family: "Noto Sans", "Open Sans", sans-serif;
  font-size: 11px;
}
.weather {
  position: relative;
  width: 246px;
  padding-left: 16px;
}
.weather svg {
  width: 28px;
  height: 28px;
}
.badge {
  position: absolute;
  left: 28px;
  top: 0;
  width: 16px;
  height: 16px;
  color: #fff;
  font-size: 11px;
  font-weight: 400;
  line-height: 16px;
  text-align: center;
}
.badge.blue {
  left: 22px;
  top: 0;
  border-radius: 50%;
  background: #0f78c8;
}
.apps {
  display: flex;
  width: 703px;
}
.apps button {
  position: relative;
  flex: 1;
  height: 36px;
}
.apps svg {
  width: 24px;
  height: 24px;
}
.apps .current {
  border-radius: 4px;
  background: #eaf8f3;
}
.apps .current::after,
.apps .open::after {
  content: "";
  position: absolute;
  bottom: 0;
  width: 5px;
  height: 3px;
  border-radius: 2px;
  background: #7b8c86;
}
.apps .current::after {
  width: 14px;
  background: #1a6fc4;
}
.tray {
  display: flex;
  align-items: center;
  gap: 13px;
  margin-left: auto;
  padding-right: 17px;
}
.lang {
  padding: 0 4px;
}
.status {
  display: flex;
  gap: 6px;
}
.date {
  padding-left: 4px;
  line-height: 15px;
  text-align: right;
}
```
FILE: script.js
```js
// slot, body top, body bottom, high, low, u = up / d = down / x = doji
var bars = [
  [0, 171, 184, 171, 197, "u"], [1, 172, 175, 171, 176, "u"], [5, 180, 189, 175, 190, "d"],
  [6, 195, 207, 194, 208, "d"], [7, 199, 207, 197, 212, "u"], [8, 194, 199, 186, 201, "u"],
  [9, 193, 199, 190, 201, "d"], [10, 199, 199, 196, 206, "x"], [11, 199, 205, 194, 206, "d"],
  [12, 205, 216, 205, 217, "d"], [13, 209, 216, 207, 222, "u"], [14, 209, 217, 208, 220, "d"],
  [15, 217, 223, 212, 230, "d"], [16, 224, 224, 212, 227, "x"], [17, 219, 225, 215, 225, "u"],
  [18, 215, 220, 205, 220, "u"], [19, 200, 217, 199, 217, "u"], [20, 201, 217, 201, 225, "d"],
  [21, 218, 218, 212, 223, "x"], [22, 219, 227, 211, 227, "d"], [23, 227, 238, 225, 241, "d"],
  [24, 230, 237, 228, 242, "u"], [25, 231, 231, 224, 235, "x"], [26, 227, 227, 226, 238, "x"],
  [27, 233, 233, 227, 239, "x"], [28, 231, 231, 222, 232, "x"], [29, 233, 233, 228, 237, "x"],
  [30, 219, 235, 218, 238, "u"], [31, 210, 220, 208, 220, "u"], [32, 208, 212, 208, 224, "u"],
  [33, 205, 208, 204, 213, "u"], [34, 207, 207, 202, 211, "x"], [35, 209, 219, 207, 219, "d"],
  [36, 214, 219, 212, 227, "u"], [37, 202, 214, 202, 220, "u"], [38, 201, 207, 200, 207, "d"],
  [39, 196, 207, 193, 207, "u"], [40, 191, 196, 186, 199, "u"], [41, 190, 190, 188, 195, "x"],
  [42, 190, 199, 183, 199, "d"], [43, 199, 202, 198, 211, "d"], [44, 194, 202, 190, 203, "u"],
  [45, 194, 201, 194, 201, "d"], [46, 197, 201, 193, 206, "u"], [47, 195, 198, 194, 198, "u"],
  [48, 177, 194, 176, 196, "u"], [49, 177, 187, 174, 188, "d"], [50, 187, 187, 175, 249, "x"],
  [51, 182, 187, 177, 187, "u"], [52, 182, 196, 179, 196, "d"], [53, 183, 196, 181, 208, "u"],
  [54, 182, 192, 179, 193, "d"], [55, 190, 194, 188, 203, "u"], [56, 190, 190, 188, 198, "x"],
  [57, 179, 189, 177, 189, "u"], [58, 178, 183, 178, 188, "d"], [59, 184, 199, 184, 203, "d"],
  [60, 199, 216, 192, 218, "d"], [61, 215, 221, 214, 236, "d"], [62, 221, 235, 215, 235, "d"],
  [63, 216, 234, 214, 234, "u"], [64, 216, 216, 210, 223, "x"], [65, 206, 216, 201, 216, "u"],
  [66, 206, 210, 204, 217, "d"], [67, 198, 210, 197, 210, "u"], [68, 197, 197, 192, 203, "x"],
  [69, 193, 197, 188, 197, "u"], [70, 194, 216, 192, 217, "d"], [71, 215, 221, 209, 225, "d"],
  [72, 221, 221, 213, 222, "x"], [73, 213, 221, 210, 223, "u"], [74, 211, 219, 210, 222, "d"],
  [75, 207, 218, 206, 223, "u"], [76, 200, 207, 199, 213, "u"], [77, 191, 199, 189, 200, "u"],
  [78, 192, 192, 189, 196, "x"], [79, 193, 204, 190, 205, "d"], [80, 205, 211, 205, 219, "d"],
  [81, 212, 212, 207, 215, "x"], [82, 197, 212, 192, 213, "u"], [83, 183, 197, 182, 203, "u"],
  [84, 180, 184, 173, 184, "u"], [85, 171, 179, 169, 197, "u"], [86, 142, 171, 137, 171, "u"],
  [87, 141, 147, 137, 153, "d"], [88, 147, 152, 144, 154, "d"], [89, 146, 152, 140, 153, "u"],
  [90, 147, 161, 146, 162, "d"], [91, 159, 159, 158, 173, "x"], [92, 150, 158, 149, 173, "u"],
  [93, 145, 149, 143, 158, "u"], [94, 144, 154, 143, 156, "d"], [95, 154, 165, 153, 168, "d"],
  [96, 164, 168, 155, 168, "d"], [97, 164, 168, 155, 170, "u"], [98, 162, 165, 157, 172, "d"],
  [99, 154, 165, 151, 168, "u"], [100, 154, 161, 152, 182, "d"], [101, 153, 161, 139, 168, "u"],
  [102, 152, 156, 145, 157, "d"], [103, 144, 157, 136, 159, "u"], [104, 143, 161, 142, 161, "d"],
  [105, 162, 163, 158, 173, "d"], [106, 163, 172, 155, 174, "d"], [107, 172, 172, 168, 178, "x"],
  [108, 173, 182, 172, 188, "d"], [109, 176, 183, 167, 193, "u"], [110, 174, 237, 148, 264, "d"],
  [111, 236, 297, 217, 323, "d"], [112, 296, 329, 264, 345, "d"], [113, 329, 346, 298, 364, "d"],
  [114, 345, 434, 337, 447, "d"], [115, 395, 434, 393, 472, "u"]
];

var group = document.getElementById("candles");
var ns = "http://www.w3.org/2000/svg";
var top0 = 122;
var step = 61.3 / 10;

function add(name, attrs) {
  var el = document.createElementNS(ns, name);
  for (var key in attrs) {
    el.setAttribute(key, attrs[key]);
  }
  group.appendChild(el);
}

for (var i = 0; i < bars.length; i++) {
  var b = bars[i];
  var x = Math.round(1 + b[0] * step) + 0.5;
  add("path", { class: "wick", d: "M" + x + " " + (b[3] - top0) + "V" + (b[4] - top0) });
  if (b[5] == "x") {
    add("path", { class: "wick", d: "M" + (x - 2) + " " + (b[1] - top0 + 0.5) + "h4" });
  } else {
    add("rect", {
      class: b[5] == "u" ? "up-bar" : "down-bar",
      x: x - 2,
      y: b[1] - top0 + 0.5,
      width: 4,
      height: Math.max(b[2] - b[1] - 1, 1)
    });
  }
}
```
